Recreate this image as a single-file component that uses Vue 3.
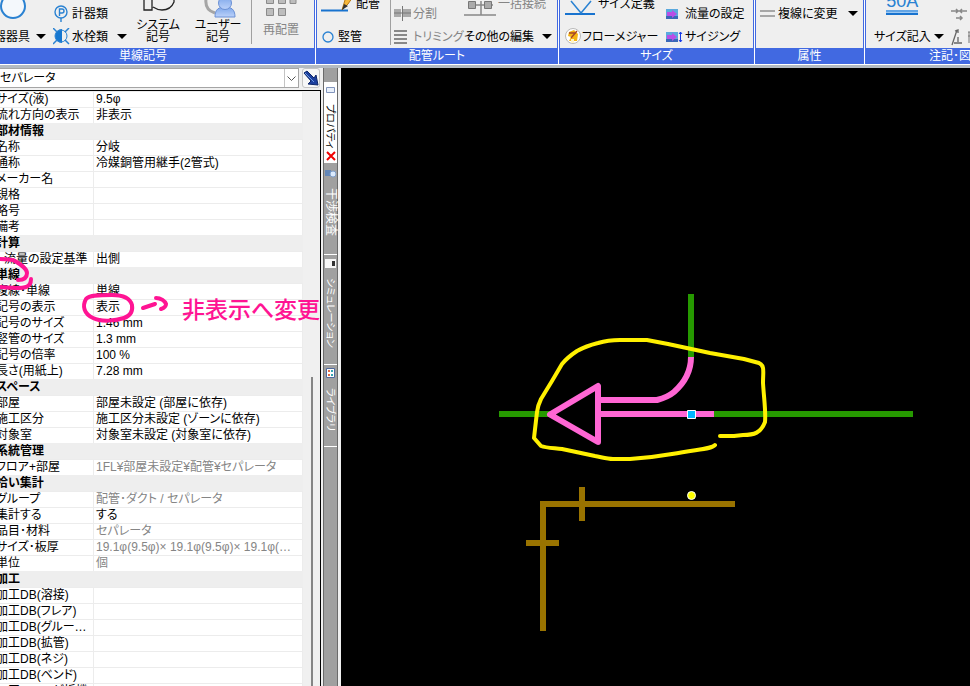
<script setup>
import { ref } from 'vue'

const kind = ref('セパレータ')

const groups = [
  {
    rows: [
      { k: 'サイズ(液)', v: '9.5φ' },
      { k: '流れ方向の表示', v: '非表示' },
    ],
  },
  {
    title: '部材情報',
    rows: [
      { k: '名称', v: '分岐' },
      { k: '通称', v: '冷媒銅管用継手(2管式)' },
      { k: 'メーカー名', v: '' },
      { k: '規格', v: '' },
      { k: '略号', v: '' },
      { k: '備考', v: '' },
    ],
  },
  { title: '計算', rows: [{ k: '流量の設定基準', v: '出側', child: true }] },
  {
    title: '単線',
    rows: [
      { k: '複線･単線', v: '単線' },
      { k: '記号の表示', v: '表示' },
      { k: '記号のサイズ', v: '1.46 mm' },
      { k: '竪管のサイズ', v: '1.3 mm' },
      { k: '記号の倍率', v: '100 %' },
      { k: '長さ(用紙上)', v: '7.28 mm' },
    ],
  },
  {
    title: 'スペース',
    rows: [
      { k: '部屋', v: '部屋未設定 (部屋に依存)' },
      { k: '施工区分', v: '施工区分未設定 (ゾーンに依存)' },
      { k: '対象室', v: '対象室未設定 (対象室に依存)' },
    ],
  },
  { title: '系統管理', rows: [{ k: 'フロア+部屋', v: '1FL¥部屋未設定¥配管¥セパレータ', dim: true }] },
  {
    title: '拾い集計',
    rows: [
      { k: 'グループ', v: '配管･ダクト / セパレータ', dim: true },
      { k: '集計する', v: 'する' },
      { k: '品目･材料', v: 'セパレータ', dim: true },
      { k: 'サイズ･板厚', v: '19.1φ(9.5φ)× 19.1φ(9.5φ)× 19.1φ(9.5φ)', dim: true },
      { k: '単位', v: '個', dim: true },
    ],
  },
  {
    title: '加工',
    rows: [
      { k: '加工DB(溶接)', v: '' },
      { k: '加工DB(フレア)', v: '' },
      { k: '加工DB(グルービ…', v: '' },
      { k: '加工DB(拡管)', v: '' },
      { k: '加工DB(ネジ)', v: '' },
      { k: '加工DB(ベンド)', v: '' },
      { k: '加工DB(ハゼ折機)', v: '' },
    ],
  },
]
</script>

<template>
  <div class="app">
    <header class="ribbon">
      <section class="group g1">
        <div class="body">
          <div class="col">
            <button class="drop-tool">
              <svg width="26" height="30" viewBox="0 0 26 30"><path d="M13 -9C9 -4 1 3 1 11a12 12 0 0 0 24 0C25 3 17 -4 13 -9z" fill="#f4f8fc" stroke="#2a82d2" stroke-width="2" /></svg>
              <span class="row end">器器具</span>
            </button>
          </div>
          <div class="col"><button class="row arrow" aria-label="器具の一覧"><svg width="10" height="5"><path d="M0 0h10L5 5z" /></svg></button></div>
          <div class="col">
            <button class="row">
              <svg class="ic" width="17" height="17" viewBox="0 0 17 17"><g fill="none" stroke="#2a82d2" stroke-width="1.4"><circle cx="8" cy="7" r="6" /><path d="M8 13v4M6.500 11V4h2.500a2 2 0 0 1 0 4H6.500" /></g></svg>
              計器類
            </button>
            <button class="row">
              <svg class="ic" width="17" height="17" viewBox="0 0 17 17"><path d="M9 1a7 7 0 0 0 0 14z" fill="#1677d0" /><circle cx="8" cy="8" r="6" fill="none" stroke="#2a82d2" /><path d="M0 0l4 4M16 0l-4 4M0 16l4-4M16 16l-4-4" stroke="#2a82d2" stroke-width="1.500" /></svg>
              水栓類
            </button>
          </div>
          <div class="col"><button class="row arrow" aria-label="水栓類の一覧"><svg width="10" height="5"><path d="M0 0h10L5 5z" /></svg></button></div>
          <div class="col">
            <button class="big">
              <svg width="38" height="20" viewBox="0 0 38 20"><path d="M5 -6v17h8V-6M14 8c3 2 5 3 9 3 6 0 10-3 12-8V-6H13" fill="#efefef" stroke="#222" stroke-width="1.300" /></svg>
              <span>システム</span><span>記号</span>
            </button>
          </div>
          <div class="col">
            <button class="big">
              <svg width="38" height="20" viewBox="0 0 38 20"><defs><linearGradient id="u" x2="0" y2="1"><stop stop-color="#7da6ea" /><stop offset="1" stop-color="#bcd2fa" /></linearGradient></defs><path d="M7 0c-1 8 2 12 9 14" fill="none" stroke="#a5a5a5" stroke-width="3" /><path d="M16 18c0-8 4-10 10-10s10 2 10 10z" fill="url(#u)" stroke="#6b90d4" /><circle cx="26" cy="4" r="6.500" fill="url(#u)" stroke="#6b90d4" /></svg>
              <span>ユーザー</span><span>記号</span>
            </button>
          </div>
          <div class="col sep">
            <button class="relayout" disabled>
              <svg width="34" height="20" viewBox="0 0 34 20"><path d="M3.500 -3.500h7v7h-7zM15.500 -3.500h7v7h-7zM27 -3.500h6v7h-6zM3.500 8.500h7v7h-7zM15.500 8.500h7v7h-7z" fill="#bdbdbd" stroke="#8b8b8b" /></svg>
              再配置
            </button>
          </div>
        </div>
        <h2>単線記号</h2>
      </section>

      <section class="group g2">
        <div class="body">
          <div class="col">
            <button class="row tall">
              <svg width="32" height="28" viewBox="0 0 32 28"><path d="M0 20.500h27" stroke="#1873cf" stroke-width="2" /><path d="M21 20l3-10 8-12 4 3-9 13z" fill="#f6b83c" stroke="#b87812" /><path d="M21 20l2-6 4 2z" fill="#333" /></svg>
              <span class="after3">配管</span>
            </button>
            <button class="row"><svg width="17" height="14" viewBox="0 0 17 14"><circle cx="7" cy="7" r="5" fill="none" stroke="#2a82d2" stroke-width="1.300" /></svg>竪管</button>
          </div>
          <div class="col sep">
            <button class="row" disabled><svg class="ic" width="17" height="15" viewBox="0 0 17 15"><path d="M0 3h7v8H0zM9 3h8v8H9z" fill="#aaa" /><path d="M0 7h17M8.500 0v15" stroke="#777" /></svg>分割</button>
            <button class="row" disabled><svg class="ic" width="17" height="15" viewBox="0 0 17 15"><path d="M0 2h13M0 6h13M0 10h13M0 14h13" stroke="#888" stroke-width="2" /></svg>トリミング</button>
          </div>
          <div class="col">
            <button class="row tall" disabled>
              <svg width="34" height="24" viewBox="0 0 34 24"><path d="M0 23h32M17 9v14M4 13h25" stroke="#888" stroke-width="1.500" /><path d="M4.500 9.500h7v7h-7zM20.500 9.500h7v7h-7z" fill="#aaa" stroke="#777" /></svg>
              一括接続
            </button>
            <button class="row">その他の編集</button>
          </div>
          <div class="col"><button class="row arrow" aria-label="その他の編集の一覧"><svg width="10" height="5"><path d="M0 0h10L5 5z" /></svg></button></div>
        </div>
        <h2>配管ルート</h2>
      </section>

      <section class="group g3">
        <div class="body">
          <div class="col">
            <button class="row tall">
              <svg width="33" height="28" viewBox="0 0 33 28"><path d="M0 24h30" stroke="#1873cf" stroke-width="2" /><path d="M6 11l10 12 10-12" fill="none" stroke="#2a82d2" stroke-width="1.500" /></svg>
              サイズ定義
            </button>
            <button class="row">
              <svg width="17" height="17" viewBox="0 0 17 17"><circle cx="8" cy="8" r="7.500" fill="#fff" stroke="#b9b9b9" /><path d="M4 13l2-4-3-1 1-4 5-2 4 4-1 7z" fill="#f5b414" /><path d="M4 5h7M6 10l6-7" stroke="#a44428" stroke-width="1.300" /><path d="M6 15v-4h3v4" fill="#fff3c3" /></svg>
              フローメジャー
            </button>
          </div>
          <div class="col">
            <button class="row"><svg class="ic" width="17" height="12" viewBox="0 0 17 12"><path d="M0 1h12v10H0z" fill="#5aa9de" /><path d="M0 8h12v3H0z" fill="#3a68b8" /><path d="M1 4h5V2l5 4-5 4V8H1z" fill="#b94ee6" /></svg>流量の設定</button>
            <button class="row"><svg class="ic" width="17" height="12" viewBox="0 0 17 12"><path d="M0 1h12v10H0z" fill="#5aa9de" /><path d="M0 8h12v3H0z" fill="#3a68b8" /><path d="M1 4h5V2l5 4-5 4V8H1z" fill="#b94ee6" /><path d="M14.500 1v10M13 3l1.500-2L16 3M13 9l1.500 2L16 9" stroke="#1539e8" fill="none" /></svg>サイジング</button>
          </div>
        </div>
        <h2>サイズ</h2>
      </section>

      <section class="group g4">
        <div class="body">
          <div class="col">
            <button class="row"><svg class="ic" width="17" height="8" viewBox="0 0 17 8"><path d="M1 1h15M1 6h15" stroke="#909090" stroke-width="1.500" /></svg>複線に変更</button>
            <span class="row"></span>
          </div>
          <div class="col"><button class="row arrow" aria-label="複線に変更の一覧"><svg width="10" height="5"><path d="M0 0h10L5 5z" /></svg></button><span class="row"></span></div>
        </div>
        <h2>属性</h2>
      </section>

      <section class="group g5">
        <div class="body">
          <div class="col">
            <button class="note-button"><span class="fifty">50A</span><i></i><span class="row">サイズ記入</span></button>
          </div>
          <div class="col"><button class="row arrow" aria-label="サイズ記入の一覧"><svg width="10" height="5"><path d="M0 0h10L5 5z" /></svg></button></div>
          <div class="col">
            <button class="row" aria-label="寸法" disabled><svg width="24" height="14" viewBox="0 0 24 14"><path d="M0 4h16M5 2l2 2-2 2M11 2L9 4l2 2M5 11h6M9 9l2 2-2 2" stroke="#888" fill="none" stroke-width="1.500" /></svg></button>
            <button class="row" aria-label="引出線" disabled><svg width="24" height="18" viewBox="0 0 24 18"><path d="M1 17L6 2M3 15h8M7 9v5M4 3l3-1v3" stroke="#666" fill="none" stroke-width="1.300" /><path d="M17 4h6M17 8h6M18 4v11" stroke="#777" /></svg></button>
          </div>
        </div>
        <h2>注記･図面</h2>
      </section>
    </header>

    <main class="work">
      <aside class="panel">
        <div class="picker">
          <select v-model="kind" aria-label="部材の種類"><option>セパレータ</option></select>
          <svg class="chev" width="9" height="6"><path d="M.5 .5l4 4 4-4" fill="none" stroke="#555" /></svg>
          <button class="pick" aria-label="選択">
            <svg width="16" height="16" viewBox="0 0 16 16"><path d="M1 3l3-2 7 7 2-3 2 10-10-1 3-3z" fill="#1c3f9e" stroke="#0d2669" /><path d="M2 3l9 9" stroke="#6d9be6" /></svg>
          </button>
        </div>
        <div class="sheet">
          <table>
            <colgroup><col class="ck" /><col /></colgroup>
            <tbody v-for="(g, i) in groups" :key="i">
              <tr v-if="g.title" class="cat"><th colspan="2" scope="rowgroup"><div class="key">{{ g.title }}</div></th></tr>
              <tr v-for="r in g.rows" :key="r.k">
                <th scope="row"><div class="key" :class="{ child: r.child }">{{ r.k }}</div></th>
                <td :class="{ dim: r.dim }">{{ r.v }}</td>
              </tr>
            </tbody>
          </table>
          <div class="track"><div class="thumb"></div></div>
        </div>
        <svg class="ink" width="180" height="70" viewBox="0 0 180 70">
          <g fill="none" stroke="#ff1493" stroke-width="4" stroke-linecap="round" stroke-linejoin="round">
            <path d="M-2 3C7 3 12 3 15 5C23 10 27 13 27 17C27 22 24 24 18 24M31 23C31 28 29 30 26 31C20 33 14 32 0 31" />
            <path d="M86 43C89 39 100 39 112 39C122 39 130 42 132 49C133 56 130 60 124 62C115 65 101 66 93 62C84 58 82 50 86 43z" />
            <path d="M143 52l12-4M156 42c5 0 9 3 10 6 0 3-2 4-5 5" />
          </g>
        </svg>
        <div class="memo">非表示へ変更</div>
      </aside>

      <nav class="tabs">
        <span class="cap"></span>
        <div class="tab on">
          <svg width="9" height="8"><path d="M.5 1.500h8v5h-8z" fill="#e9f0fa" stroke="#8295bc" /></svg>
          <button class="name">プロパティ</button>
          <button class="close" aria-label="閉じる"><svg width="10" height="10"><path d="M1 1l8 8M9 1L1 9" stroke="#f00000" stroke-width="2" /></svg></button>
        </div>
        <div class="tab t2">
          <svg width="11" height="9"><path d="M0 1h6v6H0z" fill="#6286b7" /><circle cx="8" cy="5" r="3" fill="#dbeafd" stroke="#7e9ec9" /></svg>
          <button class="name">干渉検査</button>
        </div>
        <div class="tab t3">
          <svg width="11" height="9"><path d="M0 0h11v9H0z" fill="#f7f7f7" /><path d="M7 2h3v5H7z" fill="#333" /></svg>
          <button class="name">シミュレーション</button>
        </div>
        <div class="tab t4">
          <svg width="9" height="10"><path d="M.5 .5h8v9h-8z" fill="#fff" stroke="#50699d" /><path d="M2 3h2M2 7h2" stroke="#e46d46" stroke-width="2" /><path d="M5 3h2M5 7h2" stroke="#35a6b4" stroke-width="2" /></svg>
          <button class="name">ライブラリ</button>
        </div>
      </nav>

      <div class="canvas">
        <svg class="drawing" role="img" aria-label="配管図">
          <g transform="translate(-341 -68)" fill="none">
            <path d="M499 414H550M714 414H913M691 294V358" stroke="#269900" stroke-width="6" />
            <path d="M600 414H714M600 400H657Q668 397 674 392Q691 377 691 357" stroke="#ff66d4" stroke-width="6" />
            <path d="M598 386V442L550 414.500Z" stroke="#ff66d4" stroke-width="6" stroke-linejoin="round" />
            <path d="M543 631V504M540 504H735M582 487V521M526 543H559" stroke="#997300" stroke-width="6" />
            <path d="M715 445C712 449 699 449 672 454C655 457 645 458 630 459H613C607 459 601 457 595 456L562 449C554 448 546 448 541 446L534 438L537 412Q538 405 541 399L552 381L562 364C566 359 571 355 577 351Q586 346 598 343Q608 340 620 340H647L668 344L710 353L744 359L759 363C765 366 763 371 763 383C764 399 766 412 765 422C761 433 754 435 743 435L734 436H720" stroke="#fff000" stroke-width="4" stroke-linecap="round" stroke-linejoin="round" />
            <path d="M687.500 410.500h8v8h-8z" fill="#00b7ff" stroke="#fff" />
            <circle cx="691.500" cy="495.500" r="4" fill="#ffff00" stroke="#fff" />
          </g>
        </svg>
      </div>
    </main>
  </div>
</template>

<style>
body { margin: 0; overflow: hidden; }
</style>

<style scoped>
* { box-sizing: border-box; }
.app {
  display: flex;
  flex-direction: column;
  height: 100vh;
  overflow: hidden;
  background: #f0f0f0;
  color: #000;
  font: 12px/12px "Liberation Sans", "Noto Sans CJK JP", sans-serif;
  font-feature-settings: "palt";
}
button {
  padding: 0;
  border: 0;
  background: none;
  color: inherit;
  font: inherit;
  font-feature-settings: inherit;
  white-space: nowrap;
}
button:disabled { color: #858585; }
svg { flex: none; display: block; }

.ribbon { display: flex; gap: 1px; height: 65px; padding-bottom: 1px; background: #fff; flex: none; }
.group {
  display: flex;
  flex-direction: column;
  flex: none;
  border: solid #4169e1;
  border-width: 0 1px;
  background: #efefef;
  overflow: hidden;
}
.g1 { width: 315px; border-left: 0; }
.g2 { width: 242px; }
.g3 { width: 195px; }
.g4 { width: 109px; }
.g5 { flex: 1; min-width: 0; border-right: 0; }
.group h2 {
  margin: 0;
  height: 16px;
  background: #4169e1;
  color: #fff;
  font-size: 12px;
  font-weight: 400;
  line-height: 16px;
  text-align: center;
  white-space: nowrap;
}
.g1 h2 { padding-right: 28px; }
.g5 h2 { padding-left: 63px; text-align: left; }
.body { display: grid; grid-template-rows: 48px; align-items: end; height: 48px; min-width: 0; }
.g1 .body { grid-template-columns: 36px 17px 64px 11px 60px 60px 66px; }
.g2 .body { grid-template-columns: 73px 74px 78px 12px; }
.g3 .body { grid-template-columns: 101px 84px; padding-left: 5px; }
.g4 .body { grid-template-columns: 92px 12px; }
.g5 .body { grid-template-columns: 60px 17px 24px; padding-left: 8px; }
.col { display: flex; flex-direction: column; justify-content: flex-end; align-items: flex-start; height: 70px; }
.row { display: flex; align-items: center; height: 23px; white-space: nowrap; }
.tall { height: 42px; }
.ic { margin-right: 2px; }
.g4 .ic { margin: 0 2px 0 3px; }
.after3 { margin-left: 3px; }
.g2 .col:first-child { padding-left: 4px; }
.g2 .sep { padding-left: 3px; }
.drop-tool { display: flex; flex-direction: column; width: 30px; }
.end { align-self: flex-end; }
.big { display: flex; flex-direction: column; align-items: center; width: 60px; padding-bottom: 5px; line-height: 12px; }
.big svg, .relayout svg, .drop-tool svg { overflow: visible; }
.sep { height: 44px; margin-bottom: 4px; border-left: 1px solid #a0a0a0; }
.g2 .sep { height: 48px; margin-bottom: 0; border-image: linear-gradient(#a0a0a0 44px, transparent 44px) 1; }
.g1 .sep { margin-left: 3px; }
.relayout { display: flex; flex-direction: column; gap: 4px; padding: 0 0 8px 11px; align-items: flex-start; }
.note-button { display: flex; flex-direction: column; align-items: center; color: #000; }
.fifty { color: #2a82d2; font-size: 18px; line-height: 18px; }
.note-button i { width: 32px; height: 5px; margin-bottom: 10px; border-top: 2px solid #63a5e5; border-bottom: 2px solid #1873cf; background: #9cc8f2; }

.work { display: flex; flex: 1; min-height: 0; border-top: 3px solid #b4bbc2; }
.panel { position: relative; display: flex; flex-direction: column; width: 321px; flex: none; overflow: hidden; }
.picker { position: relative; display: flex; gap: 3px; height: 22px; padding-right: 1px; flex: none; }
select {
  appearance: none;
  width: 299px;
  height: 20px;
  padding: 0;
  border: 1px solid #a5a5a5;
  border-left: 0;
  border-radius: 0;
  background: linear-gradient(90deg, #fff 284px, #c4c4c4 284px, #c4c4c4 285px, #fff 285px);
  color: #000;
  font: inherit;
  font-feature-settings: inherit;
}
.chev { position: absolute; left: 287px; top: 8px; }
.pick { display: flex; align-items: center; justify-content: center; width: 18px; height: 20px; border: 1px solid #c4c4c4; border-radius: 3px; background: #f7f7f7; }
.sheet { display: flex; flex: 1; min-height: 0; overflow: hidden; border-top: 1px solid #000; border-right: 1px solid #000; background: #f0f0f0; }
table { width: 303px; table-layout: fixed; border-collapse: separate; border-spacing: 0; align-self: flex-start; }
.ck { width: 94px; }
th, td {
  height: 16px;
  padding: 0;
  border-top: 1px solid #ececec;
  border-right: 1px solid #ececec;
  background: #fff;
  font-weight: 400;
  line-height: 14px;
  text-align: left;
  vertical-align: top;
  white-space: nowrap;
  overflow: hidden;
  text-overflow: ellipsis;
}
td { padding: 0 5px 0 2px; }
.dim { color: #858585; }
.key { margin-left: -4px; overflow: hidden; text-overflow: ellipsis; }
.child { margin-left: 4px; }
.cat th { background: #eee; border-color: #eee; font-weight: 700; line-height: 15px; }
.track { flex: 1; padding: 286px 7px 0 8px; }
.thumb { width: 2px; height: 100%; background: #858585; }
.ink { position: absolute; left: 0; top: 188px; }
.memo { position: absolute; left: 182px; top: 229px; color: #ff1493; font-size: 23px; font-weight: 500; line-height: 26px; font-feature-settings: normal; white-space: nowrap; }

.tabs { display: flex; flex-direction: column; width: 15px; margin: 0 3px 0 2px; flex: none; border: solid #6b6b6b; border-width: 0 1px; background: #a0a0a0; color: #fff; }
.cap { height: 14px; flex: none; }
.tab { display: flex; flex-direction: column; align-items: center; border-bottom: 1px solid #fff; flex: none; }
.on { height: 81px; padding-top: 4px; background: #fff; color: #000; }
.t2 { height: 92px; padding-top: 6px; }
.t3 { height: 110px; padding-top: 4px; }
.t4 { height: 82px; padding-top: 3px; }
.name { height: 60px; margin-top: 10px; font-size: 10px; text-align: left; line-height: 13px; writing-mode: vertical-rl; text-orientation: sideways; }
.on .name { height: 47px; }
.t2 .name { font-size: 12px; }
.t3 .name { height: 84px; }
.canvas { flex: 1; min-width: 0; background: #000; }
.drawing { width: 100%; height: 100%; }
</style>
